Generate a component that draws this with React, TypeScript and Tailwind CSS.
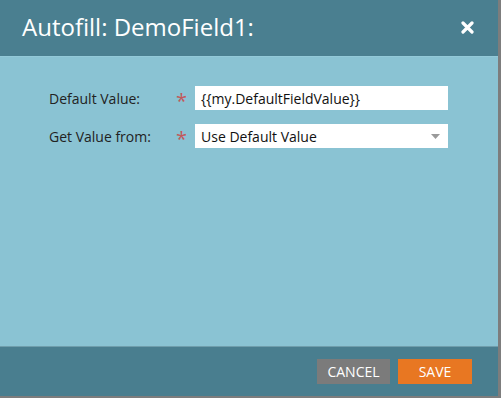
import React from "react";

export default function App() {
  return (
    <div className="w-[501px] h-[398px] bg-[#7d7d7d]" style={{ fontFamily: '"Open Sans", sans-serif' }}>
      <div className="w-[498px] h-[396px] flex flex-col">
        <div className="h-[56px] bg-[#4a7f90] flex items-center justify-between pl-[22px] pr-[24px] shrink-0">
          <span className="text-white text-[24px] leading-none pb-[2px]">Autofill: DemoField1:</span>
          <svg width="13" height="13" viewBox="0 0 13 13" className="mb-[1px]">
            <path d="M2 2 L11 11 M11 2 L2 11" stroke="white" strokeWidth="3.2" strokeLinecap="round" />
          </svg>
        </div>
        <div className="flex-1 bg-[#8ac3d3] border-t border-[#93c9d8] pt-[29px] pl-[49px] flex flex-col gap-[14px]">
          <div className="flex items-center h-[24px]">
            <span className="w-[127px] text-[14px] text-[#222]">Default Value:</span>
            <span className="w-[19px] text-[#c2585a] text-[20px] leading-none pt-[6px]">*</span>
            <div className="w-[253px] h-[24px] bg-white flex items-center pl-[6px] text-[14px] text-[#111]">
              {"{{my.DefaultFieldValue}}"}
            </div>
          </div>
          <div className="flex items-center h-[24px]">
            <span className="w-[127px] text-[14px] text-[#222]">Get Value from:</span>
            <span className="w-[19px] text-[#c2585a] text-[20px] leading-none pt-[6px]">*</span>
            <div className="w-[253px] h-[24px] bg-white flex items-center justify-between pl-[6px] pr-[8px] text-[14px] text-[#111]">
              <span>Use Default Value</span>
              <svg width="9" height="5" viewBox="0 0 9 5">
                <path d="M0 0 H9 L4.5 5 Z" fill="#9a9a9a" />
              </svg>
            </div>
          </div>
        </div>
        <div className="h-[50px] bg-[#497e8f] border-t border-[#6f9eac] flex items-start justify-end pt-[12px] pr-[26px] gap-[8px] shrink-0">
          <button className="w-[73px] h-[25px] bg-[#7b7b7b] text-white text-[14px] leading-none">CANCEL</button>
          <button className="w-[74px] h-[25px] bg-[#e87722] text-white text-[14px] leading-none">SAVE</button>
        </div>
      </div>
    </div>
  );
}
